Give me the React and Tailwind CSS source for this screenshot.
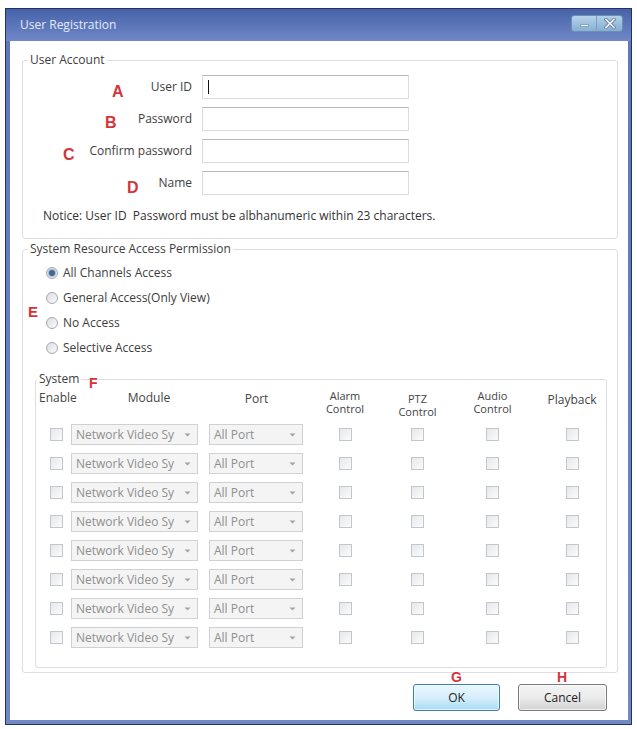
import React from "react";

function Check() {
  return (
    <span className="block w-[13px] h-[13px] border border-[#c3c6ca] bg-linear-to-br from-[#e6e8ea] to-[#fbfbfb]" />
  );
}

function Arrow() {
  return (
    <svg width="7" height="4" viewBox="0 0 7 4" className="shrink-0">
      <path d="M0.5 0.5 L6.5 0.5 L3.5 3.5 Z" fill="#a3a3a3" />
    </svg>
  );
}

function Select({ w, text }) {
  return (
    <div
      className="h-[21px] border border-[#cfd1d4] bg-[#f4f4f4] flex items-center justify-between pl-[4px] pr-[6px] text-[#8f8f8f]"
      style={{ width: w }}
    >
      <span className="whitespace-nowrap">{text}</span>
      <Arrow />
    </div>
  );
}

function Radio({ checked, label }) {
  return (
    <div className="h-[25px] flex items-center">
      <span className="w-[12px] h-[12px] rounded-full border border-[#a4a9ae] bg-linear-to-br from-[#dadde1] to-[#fbfbfb] flex items-center justify-center">
        {checked && <span className="w-[6px] h-[6px] rounded-full bg-[#3f6994] shadow-[0_0_1px_1px_#9fb8d3]" />}
      </span>
      <span className="ml-[5px] text-[#3d3d3d]">{label}</span>
    </div>
  );
}

function Field({ label, cursor }) {
  return (
    <div className="flex items-center h-[24px]">
      <div className="w-[169px] text-right text-[#3d3d3d]">{label}</div>
      <div className="ml-[10px] w-[207px] h-[24px] border border-[#dadcdf] border-t-[#b6bac0] bg-white flex items-center">
        {cursor && <span className="ml-[5px] w-px h-[14px] bg-[#111]" />}
      </div>
    </div>
  );
}

const GRID = "grid grid-cols-[32px_135px_107px_70px_75px_75px_76px]";

function Row() {
  return (
    <div className={GRID + " h-[21px] items-center"}>
      <div className="pl-[14px]">
        <Check />
      </div>
      <div className="pl-[3px]">
        <Select w={127} text="Network Video Sy" />
      </div>
      <div className="pl-[6px]">
        <Select w={94} text="All Port" />
      </div>
      <div className="flex justify-center">
        <Check />
      </div>
      <div className="flex justify-center">
        <Check />
      </div>
      <div className="flex justify-center">
        <Check />
      </div>
      <div className="flex justify-center pl-[8px]">
        <Check />
      </div>
    </div>
  );
}

function Letter({ ch, className }) {
  return (
    <span
      className={
        "absolute font-['Liberation_Sans',Arial,sans-serif] font-bold text-[#d5343b] leading-none " + className
      }
    >
      {ch}
    </span>
  );
}

function TwoLine({ a, b, className }) {
  return (
    <div className={"flex flex-col items-center text-[11px] leading-[13px] " + (className || "")}>
      <span className="leading-[13px]">{a}</span>
      <span className="leading-[13px]">{b}</span>
    </div>
  );
}

export default function App() {
  const rows = [0, 1, 2, 3, 4, 5, 6, 7];
  return (
    <div className="relative w-[637px] h-[729px] bg-white overflow-hidden font-['Open_Sans','Noto_Sans',sans-serif] text-[12px] leading-[14px]">
      <div className="ml-[5px] mt-[8px] w-[627px] h-[717px] border border-[#22335f] bg-linear-to-b from-[#5d77ba] to-[#7088c6] flex flex-col">
        {/* title bar */}
        <div className="h-[32px] shrink-0 flex items-start justify-between bg-linear-to-b from-[#4862aa] to-[#6f88c7]">
          <div className="pl-[14px] pt-[9px] text-[#e4eaf7] text-[12px]">User Registration</div>
          <div className="mt-[6px] mr-[8px] flex h-[17px] rounded-[3px] border border-[#6d8fb4] overflow-hidden">
            <div className="w-[25px] h-full bg-linear-to-b from-[#b7d3ea] to-[#86b0d5] flex items-end justify-center pb-[4px] border-r border-[#7c9cbf]">
              <span className="block w-[9px] h-[3px] bg-[#f2f6fb] border border-[#8aa3bd]" />
            </div>
            <div className="w-[25px] h-full bg-linear-to-b from-[#b3d0e8] to-[#84aed3] flex items-center justify-center">
              <svg width="12" height="11" viewBox="0 0 12 11">
                <path d="M2 1.5 L10 9.5 M10 1.5 L2 9.5" stroke="#6f8397" strokeWidth="3.4" strokeLinecap="square" />
                <path d="M2 1.5 L10 9.5 M10 1.5 L2 9.5" stroke="#eef3f8" strokeWidth="1.6" strokeLinecap="square" />
              </svg>
            </div>
          </div>
        </div>

        {/* body frame */}
        <div className="flex-1 pl-[4px] pr-[3px] pb-[4px] flex">
          <div className="flex-1 bg-white flex flex-col">
            {/* User Account */}
            <fieldset className="mt-[12px] ml-[12px] w-[596px] border border-[#dcdee1] rounded-[3px] pb-[15px]">
              <legend className="ml-[5px] px-[2px] text-[#3d3d3d] leading-[14px]">User Account</legend>
              <div className="pt-[8px] flex flex-col gap-[8px]">
                <Field label="User ID" cursor />
                <Field label="Password" />
                <Field label="Confirm password" />
                <Field label="Name" />
              </div>
              <div className="mt-[14px] pl-[20px] text-[#333] whitespace-nowrap">
                Notice: User ID&nbsp; Password must be albhanumeric within 23 characters.
              </div>
            </fieldset>

            {/* System Resource Access Permission */}
            <fieldset className="mt-[3px] ml-[12px] w-[596px] border border-[#dcdee1] rounded-[3px] pb-[4px]">
              <legend className="ml-[5px] px-[2px] text-[#3d3d3d] leading-[14px]">
                System Resource Access Permission
              </legend>
              <div className="pt-[4px] pl-[23px]">
                <Radio checked label="All Channels Access" />
                <Radio label="General Access(Only View)" />
                <Radio label="No Access" />
                <Radio label="Selective Access" />
              </div>

              <fieldset className="mt-[12px] ml-[12px] w-[571px] border border-[#dcdee1] rounded-[3px] pb-[19px]">
                <legend className="ml-[1px] px-[2px] text-[#3d3d3d] leading-[14px]">System</legend>
                <div className={GRID + " pt-[3px] h-[28px] items-start text-[#444]"}>
                  <div className="pl-[3px] pt-[2px] whitespace-nowrap">Enable</div>
                  <div className="pl-[27px] pt-[2px] text-center">Module</div>
                  <div className="pt-[3px] text-center">Port</div>
                  <TwoLine a="Alarm" b="Control" />
                  <TwoLine a="PTZ" b="Control" className="pt-[3px]" />
                  <TwoLine a="Audio" b="Control" />
                  <div className="pl-[8px] pt-[4px] text-center">Playback</div>
                </div>
                <div className="mt-[10px] flex flex-col gap-[8px]">
                  {rows.map((r) => (
                    <Row key={r} />
                  ))}
                </div>
              </fieldset>
            </fieldset>

            {/* buttons */}
            <div className="mt-[11px] flex justify-end pr-[21px] gap-[18px]">
              <button className="w-[87px] h-[27px] rounded-[3px] border border-[#3c7fb1] bg-linear-to-b from-[#eaf6fd] via-[#d7effc] to-[#a9daf5] shadow-[inset_0_0_0_1px_#ffffff99] text-[#222]">
                OK
              </button>
              <button className="w-[89px] h-[27px] rounded-[3px] border border-[#7a7a7a] bg-linear-to-b from-[#f4f4f4] via-[#ebebeb] to-[#d2d2d2] shadow-[inset_0_0_0_1px_#ffffffaa] text-[#222]">
                Cancel
              </button>
            </div>
          </div>
        </div>
      </div>

      <Letter ch="A" className="text-[16px] left-[112px] top-[84px]" />
      <Letter ch="B" className="text-[16px] left-[105px] top-[115px]" />
      <Letter ch="C" className="text-[16px] left-[63px] top-[147px]" />
      <Letter ch="D" className="text-[16px] left-[127px] top-[180px]" />
      <Letter ch="E" className="text-[15px] left-[28px] top-[304px]" />
      <Letter ch="F" className="text-[14px] left-[89px] top-[376px]" />
      <Letter ch="G" className="text-[14px] left-[451px] top-[670px]" />
      <Letter ch="H" className="text-[14px] left-[557px] top-[670px]" />
    </div>
  );
}
